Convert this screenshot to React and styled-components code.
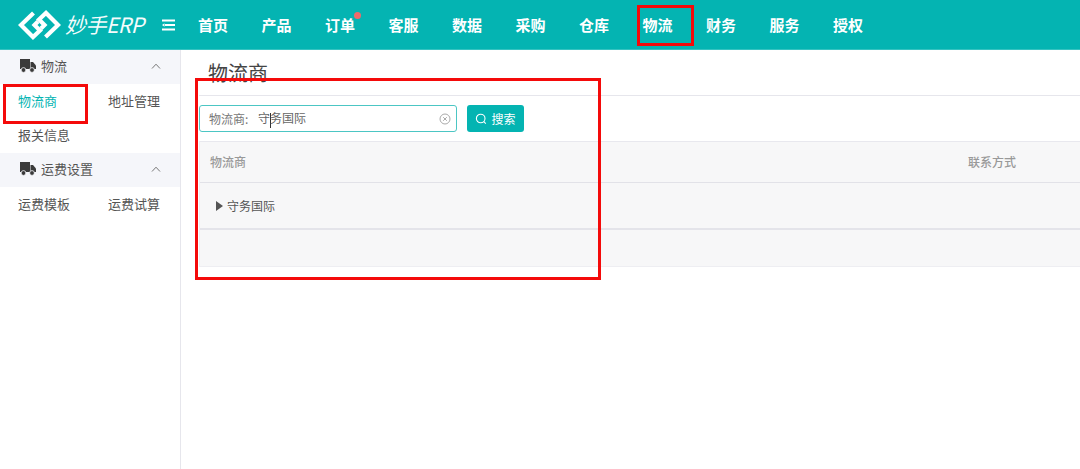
import React from "react";
import styled, { createGlobalStyle } from "styled-components";

const Global = createGlobalStyle`
  html, body { margin: 0; padding: 0; background: #fff; }
  body { font-family: "Noto Sans CJK SC", "Liberation Sans", sans-serif; }
  #root { width: 1080px; height: 469px; overflow: hidden; position: relative; }
`;
const Page = styled.div`display:flex;flex-direction:column;width:1080px;height:469px;position:relative;overflow:hidden;`;
const Header = styled.header`display:flex;align-items:center;height:50px;flex:none;background:#04b4b2;color:#fff;padding-left:18px;box-sizing:border-box;border-bottom:1px solid #35c3c1;`;
const LogoBox = styled.div`display:flex;align-items:center;width:143px;gap:4px;flex:none;`;
const LogoText = styled.span`font-size:21px;font-style:italic;font-weight:400;letter-spacing:-0.5px;white-space:nowrap;line-height:1;color:#f4fcfc;`;
const Burger = styled.svg`width:15px;height:12px;flex:none;margin-right:22px;`;
const Nav = styled.nav`display:flex;gap:33.5px;`;
const NavItem = styled.span`font-size:15px;font-weight:700;line-height:20px;width:30px;white-space:nowrap;position:relative;`;
const Dot = styled.i`position:absolute;left:29px;top:-3px;width:7px;height:7px;border-radius:50%;background:#ee6a6a;`;
const Body = styled.div`display:flex;flex:1;min-height:0;`;
const Side = styled.aside`width:181px;flex:none;border-right:1px solid #e6e6ec;box-sizing:border-box;`;
const SideHead = styled.div`height:34px;background:#f5f6fa;display:flex;align-items:center;padding:0 19px 2px 20px;box-sizing:border-box;font-size:13px;line-height:18px;color:#555;gap:5px;margin-top:${p => p.$top || 0}px;`;
const Chev = styled.svg`width:10px;height:6px;margin-left:auto;`;
const SideGrid = styled.div`display:grid;grid-template-columns:90px 1fr;grid-auto-rows:34px;padding-left:18px;font-size:13px;line-height:18px;color:#555;align-items:center;`;
const SideLink = styled.span`color:${p => p.$active ? "#04b4b2" : "#555"};white-space:nowrap;`;
const Main = styled.main`flex:1;min-width:0;padding-left:18px;`;
const Title = styled.h1`margin:0;height:45px;border-bottom:1px solid #e6e6ec;font-size:20px;font-weight:400;color:#444;line-height:46px;padding-left:9px;`;
const Search = styled.div`display:flex;gap:10px;margin-top:9px;`;
const Field = styled.div`width:258px;height:27px;box-sizing:border-box;border:1px solid #4cc6c4;border-radius:3px;display:flex;align-items:center;padding:0 5px 0 9px;font-size:12px;color:#666;white-space:nowrap;`;
const FieldLabel = styled.span`width:49px;color:#777;`;
const Caret = styled.i`display:inline-block;width:1px;height:15px;background:#333;margin:0 -1px 0 0;vertical-align:middle;`;
const Clear = styled.svg`width:12px;height:12px;margin-left:auto;`;
const Btn = styled.button`width:57px;height:27px;border:0;border-radius:3px;background:#04b4b2;color:#fff;font:12px "Noto Sans CJK SC",sans-serif;display:flex;align-items:center;justify-content:center;gap:4px;padding:0;`;
const Table = styled.div`margin-top:9px;background:#f7f7f8;font-size:12px;border-left:1px solid #eeeef2;`;
const THead = styled.div`height:42px;box-sizing:border-box;border-top:1px solid #e8e8ee;border-bottom:1px solid #e2e2e8;display:flex;align-items:center;padding:0 0 2px 10px;color:#999;font-weight:500;`;
const Contact = styled.span`margin-left:auto;width:112px;`;
const TRow = styled.div`height:47px;box-sizing:border-box;border-bottom:2px solid #e4e4ea;display:flex;align-items:center;padding-left:16px;color:#555;font-size:12px;gap:4px;`;
const Arrow = styled.i`width:0;height:0;border-left:7px solid #555;border-top:5px solid transparent;border-bottom:5px solid transparent;`;
const TFoot = styled.div`height:36px;border-bottom:1px solid #eeeef2;`;
const Note = styled.div`position:absolute;border:3px solid #f40a0a;box-sizing:border-box;pointer-events:none;`;

const Truck = () => (
  <svg width="16" height="14" viewBox="0 0 16 14">
    <path d="M0 0h10v10H0z" fill="#3a3a3a"/>
    <path d="M10.5 3h2.5l3 3.5V10h-5.5z" fill="#3a3a3a"/>
    <circle cx="3.5" cy="11" r="2.4" fill="#3a3a3a" stroke="#f5f6fa" strokeWidth=".8"/>
    <circle cx="12" cy="11" r="2.4" fill="#3a3a3a" stroke="#f5f6fa" strokeWidth=".8"/>
  </svg>
);
const Up = () => <Chev viewBox="0 0 10 6"><path d="M1 5.5 5 1.2l4 4.3" fill="none" stroke="#777" strokeWidth="1"/></Chev>;
const navs = ["首页","产品","订单","客服","数据","采购","仓库","物流","财务","服务","授权"];

export default function App() {
  return (
    <Page>
      <Global/>
      <Header>
        <LogoBox>
          <svg width="43" height="30" viewBox="0 0 43 30">
            <g fill="none" stroke="#fff" strokeWidth="4.2" strokeLinejoin="miter">
              <path d="M15.5 3 3 15l12 12 7-6.5-5.5-5.5 3.5-3.5"/>
              <path d="M27.5 27 40 15 28 3l-7 6.5 5.5 5.5-3.5 3.5"/>
            </g>
          </svg>
          <LogoText>妙手ERP</LogoText>
        </LogoBox>
        <Burger viewBox="0 0 15 12">
          <path d="M1 1.5h13M4 6h10M1 10.5h13" stroke="#fff" strokeWidth="1.8"/>
          <path d="M1 6l2.5-1.8v3.6z" fill="#fff"/>
        </Burger>
        <Nav>{navs.map(n => <NavItem key={n}>{n}{n==="订单" && <Dot/>}</NavItem>)}</Nav>
      </Header>
      <Body>
        <Side>
          <SideHead><Truck/>物流<Up/></SideHead>
          <SideGrid>
            <SideLink $active>物流商</SideLink><SideLink>地址管理</SideLink>
            <SideLink>报关信息</SideLink>
          </SideGrid>
          <SideHead $top={1}><Truck/>运费设置<Up/></SideHead>
          <SideGrid>
            <SideLink>运费模板</SideLink><SideLink>运费试算</SideLink>
          </SideGrid>
        </Side>
        <Main>
          <Title>物流商</Title>
          <Search>
            <Field>
              <FieldLabel>物流商:</FieldLabel>
              <span>守<Caret/>务国际</span>
              <Clear viewBox="0 0 12 12"><circle cx="6" cy="6" r="5" fill="none" stroke="#aaa"/><path d="M4.2 4.2l3.6 3.6M7.8 4.2 4.2 7.8" stroke="#aaa"/></Clear>
            </Field>
            <Btn>
              <svg width="12" height="12" viewBox="0 0 12 12"><circle cx="5.7" cy="5.5" r="4.3" fill="none" stroke="#fff" strokeWidth="1.1"/><path d="M8.8 8.7l2 2" stroke="#fff" strokeWidth="1.1"/></svg>
              搜索
            </Btn>
          </Search>
          <Table>
            <THead>物流商<Contact>联系方式</Contact></THead>
            <TRow><Arrow/>守务国际</TRow>
            <TFoot/>
          </Table>
        </Main>
      </Body>
      <Note style={{left:3,top:84,width:85,height:40}}/>
      <Note style={{left:195,top:78,width:406,height:202}}/>
      <Note style={{left:637,top:5,width:57,height:41}}/>
    </Page>
  );
}
